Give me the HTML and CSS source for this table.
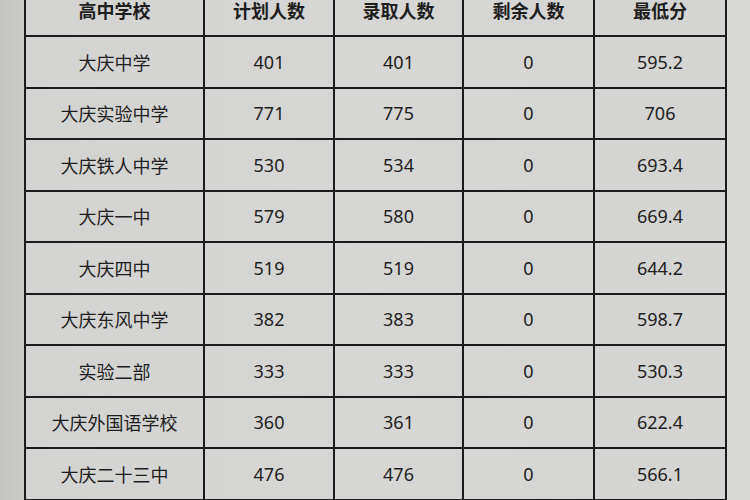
FILE: index.html
```html
<!DOCTYPE html>
<html lang="zh">
<head>
<meta charset="utf-8">
<link rel="stylesheet" href="styles.css">
</head>
<body>
<div class="page">
  <table class="scores">
    <colgroup>
      <col class="c1"><col class="c2"><col class="c3"><col class="c4"><col class="c5">
    </colgroup>
    <thead>
      <tr><th>高中学校</th><th>计划人数</th><th>录取人数</th><th>剩余人数</th><th>最低分</th></tr>
    </thead>
    <tbody>
      <tr><td>大庆中学</td><td>401</td><td>401</td><td>0</td><td>595.2</td></tr>
      <tr><td>大庆实验中学</td><td>771</td><td>775</td><td>0</td><td>706</td></tr>
      <tr><td>大庆铁人中学</td><td>530</td><td>534</td><td>0</td><td>693.4</td></tr>
      <tr><td>大庆一中</td><td>579</td><td>580</td><td>0</td><td>669.4</td></tr>
      <tr><td>大庆四中</td><td>519</td><td>519</td><td>0</td><td>644.2</td></tr>
      <tr><td>大庆东风中学</td><td>382</td><td>383</td><td>0</td><td>598.7</td></tr>
      <tr><td>实验二部</td><td>333</td><td>333</td><td>0</td><td>530.3</td></tr>
      <tr><td>大庆外国语学校</td><td>360</td><td>361</td><td>0</td><td>622.4</td></tr>
      <tr><td>大庆二十三中</td><td>476</td><td>476</td><td>0</td><td>566.1</td></tr>
    </tbody>
  </table>
</div>
</body>
</html>
```
FILE: styles.css
```css
html, body {
  margin: 0;
  padding: 0;
  width: 750px;
  height: 500px;
  overflow: hidden;
}
body {
  background: linear-gradient(to right, #c4c4c2 0px, #cdcdcb 30px, #d2d2d0 400px, #d9d9d7 740px);
  font-family: "Noto Sans CJK SC", "Noto Sans", sans-serif;
  color: #1e1e1e;
}
.page {
  padding-left: 24px;
  margin-top: -17px;
}
.scores {
  border-collapse: collapse;
  table-layout: fixed;
  width: 701px;
  background: linear-gradient(to right, #d3d3d1, #d6d6d4 50%, #d4d4d2);
}
.c1 { width: 179px; }
.c2 { width: 130px; }
.c3 { width: 129px; }
.c4 { width: 131px; }
.c5 { width: 132px; }
.scores th, .scores td {
  border: 2px solid #1c1c1c;
  text-align: center;
  vertical-align: middle;
  padding: 0;
  height: 49.5px;
  font-size: 18px;
  line-height: 20px;
}
.scores th {
  font-weight: 700;
  height: 50px;
  padding-bottom: 0;
}
.scores td {
  font-weight: 400;
  font-family: "Noto Sans", "Noto Sans CJK SC", sans-serif;
}
.scores td:first-child {
  font-family: "Noto Sans CJK SC", sans-serif;
}
```
